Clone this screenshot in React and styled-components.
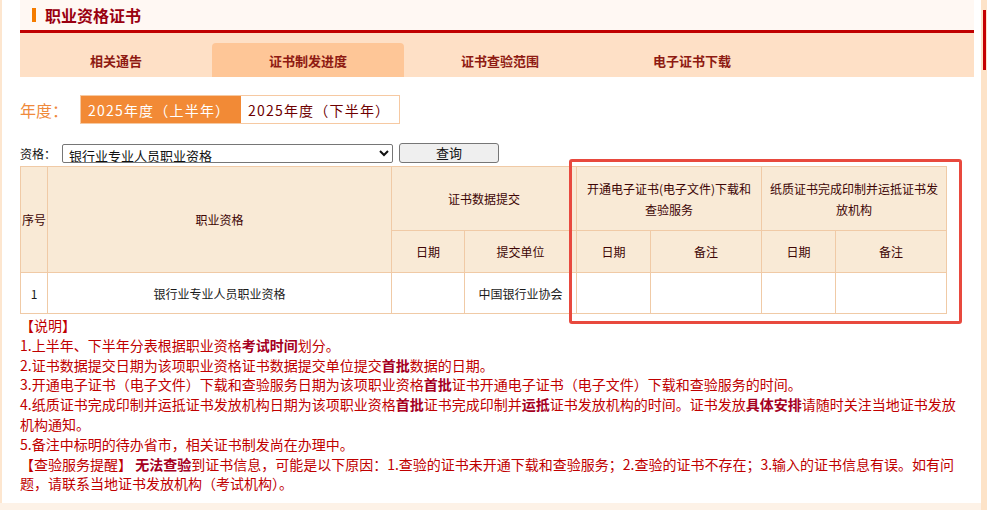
import React, { useState } from 'react';
import styled, { createGlobalStyle } from 'styled-components';

const GlobalStyle = createGlobalStyle`
  html, body {
    margin: 0;
    padding: 0;
    background: #fdf2e7;
  }
  body {
    font-family: "Noto Sans CJK SC", "Liberation Sans", sans-serif;
  }
  * { box-sizing: border-box; }
`;

const Page = styled.div`
  display: flex;
  width: 987px;
  height: 510px;
  overflow: hidden;
  background: #fdf2e7;
`;

const LeftStrip = styled.div`
  width: 2px;
  height: 503px;
  background: #fde6cf;
`;

const Panel = styled.div`
  position: relative;
  width: 979px;
  height: 503px;
  background: #ffffff;
  padding: 0 7px 0 18px;
`;

const SideStrip = styled.div`
  flex: 1;
  height: 510px;
  background: #fde3c8;
  padding: 10px 0 0 2px;
`;

const SideBar = styled.div`
  width: 3px;
  height: 60px;
  background: #c40000;
`;

const Header = styled.div`
  display: flex;
  align-items: center;
  gap: 9px;
  height: 30px;
  padding-left: 12px;
  background: #fff8f3;
`;

const Marker = styled.span`
  width: 4px;
  height: 14px;
  background: #f57c00;
`;

const Title = styled.h1`
  margin: 0;
  font-size: 16px;
  font-weight: bold;
  color: #9a0010;
  line-height: 1;
`;

const RedLine = styled.div`
  height: 3px;
  background: #c00000;
`;

const TabBar = styled.div`
  display: flex;
  align-items: flex-end;
  height: 44px;
  background: #fee0c6;
`;

const Tab = styled.div`
  width: 192px;
  height: ${p => (p.$active ? '34px' : '44px')};
  display: flex;
  align-items: center;
  justify-content: center;
  padding-top: ${p => (p.$active ? '0' : '10px')};
  font-size: 13px;
  font-weight: bold;
  color: #8e1a12;
  background: ${p => (p.$active ? '#fec697' : 'transparent')};
  border-radius: ${p => (p.$active ? '4px 4px 0 0' : '0')};
  cursor: pointer;
`;

const YearRow = styled.div`
  display: flex;
  align-items: center;
  margin-top: 18px;
  height: 29px;
`;

const YearLabel = styled.span`
  width: 60px;
  font-size: 16px;
  color: #ef8a3c;
  line-height: 1;
`;

const YearGroup = styled.div`
  display: flex;
  height: 29px;
  border: 1px solid #f6c9a2;
`;

const YearButton = styled.div`
  width: ${p => p.$w}px;
  display: flex;
  align-items: center;
  padding-left: 7px;
  font-size: 14px;
  letter-spacing: 1.2px;
  color: ${p => (p.$active ? '#ffffff' : '#6e0000')};
  background: ${p => (p.$active ? '#f28a36' : '#ffffff')};
  cursor: pointer;
`;

const QueryRow = styled.div`
  display: flex;
  align-items: center;
  margin-top: 19px;
  height: 20px;
`;

const QueryLabel = styled.span`
  width: 42px;
  font-size: 12px;
  color: #111;
`;

const Select = styled.select`
  width: 331px;
  height: 19px;
  padding: 0 0 0 2px;
  font-family: inherit;
  font-size: 13px;
  line-height: 1;
  color: #111;
  border: 1px solid #767676;
  border-radius: 2px;
  background: #fff;
`;

const QueryButton = styled.button`
  margin-left: 6px;
  width: 100px;
  height: 20px;
  padding: 0;
  font-family: inherit;
  font-size: 13px;
  line-height: 18px;
  color: #111;
  background: #efefef;
  border: 1px solid #767676;
  border-radius: 3px;
`;

const Table = styled.table`
  margin-top: 3px;
  width: 926px;
  border-collapse: collapse;
  table-layout: fixed;
  font-size: 12px;

  th, td {
    border: 1px solid #f0caa6;
    text-align: center;
    padding: 0 4px;
    line-height: 21px;
  }

  th {
    background: #f9ead6;
    font-weight: normal;
    color: #3d0505;
  }

  td {
    color: #1a1a1a;
  }
`;

const HeadTall = styled.tr`
  height: 64px;
`;

const HeadLow = styled.tr`
  height: 42px;
`;

const DataRow = styled.tr`
  height: 41px;
`;

const Notes = styled.div`
  margin-top: 2px;
  width: 946px;
  font-size: 14px;
  line-height: 19.8px;
  color: #c00000;
`;

const NoteLine = styled.div``;

const Em = styled.b`
  color: #a5001f;
`;

const Highlight = styled.div`
  position: absolute;
  left: 567px;
  top: 159px;
  width: 393px;
  height: 165px;
  border: 3px solid #e8493e;
  border-radius: 3px;
  pointer-events: none;
`;

const tabs = ['相关通告', '证书制发进度', '证书查验范围', '电子证书下载'];

export default function App() {
  const [active, setActive] = useState(1);
  const [half, setHalf] = useState(0);

  return (
    <>
      <GlobalStyle />
      <Page>
        <LeftStrip />
        <Panel>
          <Header>
            <Marker />
            <Title>职业资格证书</Title>
          </Header>
          <RedLine />
          <TabBar>
            {tabs.map((t, i) => (
              <Tab key={t} $active={i === active} onClick={() => setActive(i)}>{t}</Tab>
            ))}
          </TabBar>

          <YearRow>
            <YearLabel>年度：</YearLabel>
            <YearGroup>
              <YearButton $w={160} $active={half === 0} onClick={() => setHalf(0)}>2025年度（上半年）</YearButton>
              <YearButton $w={158} $active={half === 1} onClick={() => setHalf(1)}>2025年度（下半年）</YearButton>
            </YearGroup>
          </YearRow>

          <QueryRow>
            <QueryLabel>资格：</QueryLabel>
            <Select defaultValue="bank">
              <option value="bank">银行业专业人员职业资格</option>
            </Select>
            <QueryButton>查询</QueryButton>
          </QueryRow>

          <Table>
            <colgroup>
              <col style={{ width: 27 }} />
              <col style={{ width: 344 }} />
              <col style={{ width: 73 }} />
              <col style={{ width: 112 }} />
              <col style={{ width: 74 }} />
              <col style={{ width: 111 }} />
              <col style={{ width: 74 }} />
              <col style={{ width: 111 }} />
            </colgroup>
            <thead>
              <HeadTall>
                <th rowSpan={2} style={{ padding: 0 }}>序号</th>
                <th rowSpan={2}>职业资格</th>
                <th colSpan={2}>证书数据提交</th>
                <th colSpan={2}>开通电子证书(电子文件)下载和查验服务</th>
                <th colSpan={2}>纸质证书完成印制并运抵证书发放机构</th>
              </HeadTall>
              <HeadLow>
                <th>日期</th>
                <th>提交单位</th>
                <th>日期</th>
                <th>备注</th>
                <th>日期</th>
                <th>备注</th>
              </HeadLow>
            </thead>
            <tbody>
              <DataRow>
                <td>1</td>
                <td>银行业专业人员职业资格</td>
                <td></td>
                <td>中国银行业协会</td>
                <td></td>
                <td></td>
                <td></td>
                <td></td>
              </DataRow>
            </tbody>
          </Table>

          <Notes>
            <NoteLine>【说明】</NoteLine>
            <NoteLine>1.上半年、下半年分表根据职业资格<Em>考试时间</Em>划分。</NoteLine>
            <NoteLine>2.证书数据提交日期为该项职业资格证书数据提交单位提交<Em>首批</Em>数据的日期。</NoteLine>
            <NoteLine>3.开通电子证书（电子文件）下载和查验服务日期为该项职业资格<Em>首批</Em>证书开通电子证书（电子文件）下载和查验服务的时间。</NoteLine>
            <NoteLine>4.纸质证书完成印制并运抵证书发放机构日期为该项职业资格<Em>首批</Em>证书完成印制并<Em>运抵</Em>证书发放机构的时间。证书发放<Em>具体安排</Em>请随时关注当地证书发放机构通知。</NoteLine>
            <NoteLine>5.备注中标明的待办省市，相关证书制发尚在办理中。</NoteLine>
            <NoteLine>【查验服务提醒】 <Em>无法查验</Em>到证书信息，可能是以下原因：1.查验的证书未开通下载和查验服务；2.查验的证书不存在；3.输入的证书信息有误。如有问题，请联系当地证书发放机构（考试机构）。</NoteLine>
          </Notes>

          <Highlight />
        </Panel>
        <SideStrip>
          <SideBar />
        </SideStrip>
      </Page>
    </>
  );
}
